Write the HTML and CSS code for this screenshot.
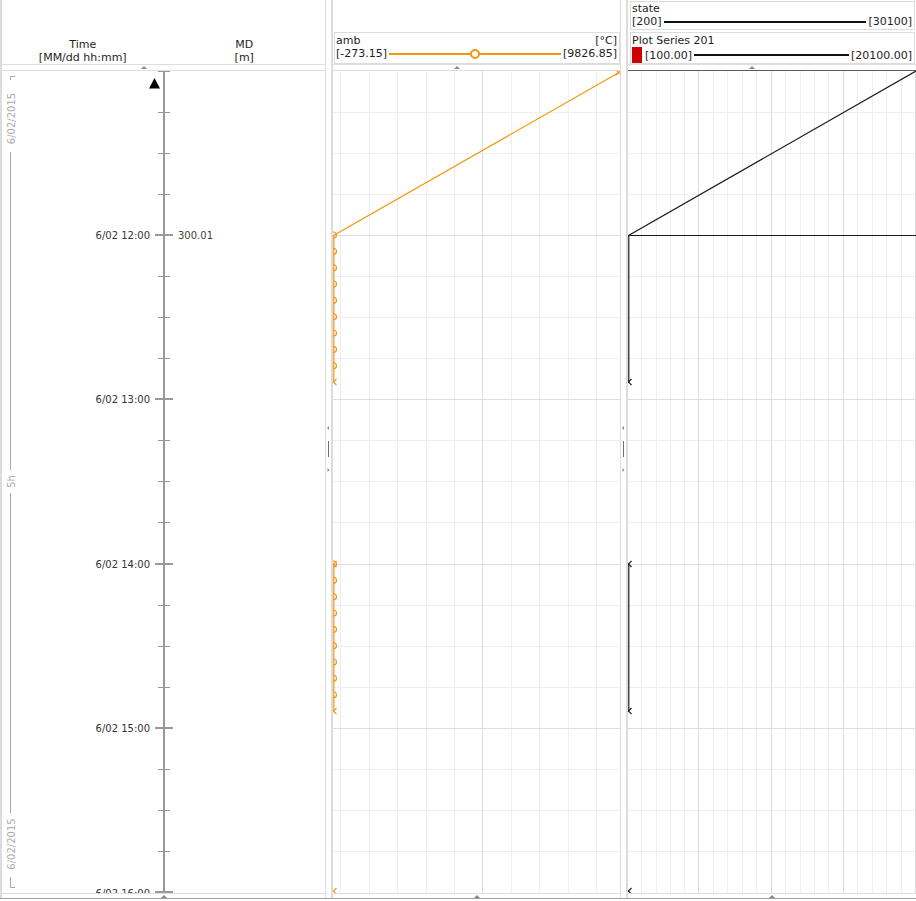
FILE: index.html
```html
<!DOCTYPE html>
<html>
<head>
<meta charset="utf-8">
<title>Log view</title>
<link rel="stylesheet" href="styles.css">
</head>
<body>
<div class="app">
  <section class="track track-index">
    <div class="head head-index">
      <div class="col-title"><div>Time</div><div>[MM/dd hh:mm]</div></div>
      <div class="col-title"><div>MD</div><div>[m]</div></div>
    </div>
    <div class="band"><span class="caret shifted"></span></div>
    <div class="body">
      <svg class="chart" width="323" height="822" viewBox="0 0 323 822">
        <path class="bracket" d="M13 5.5H8.5V9 M8.5 81V399 M8.5 422V742 M8.5 806V816.5H13"/>
        <text class="span-label" transform="translate(9,47.5) rotate(-90)">6/02/2015</text>
        <text class="span-label" transform="translate(9,410.5) rotate(-90)">5h</text>
        <text class="span-label" transform="translate(9,773) rotate(-90)">6/02/2015</text>
        <rect class="axis" x="161" y="0" width="2" height="822"/>
        <path class="tick" d="M156 0.5H168 M156 41.5H168 M156 82.5H168 M156 123.5H168 M156 205.5H168 M156 246.5H168 M156 287.5H168 M156 369.5H168 M156 410.5H168 M156 451.5H168 M156 534.5H168 M156 575.5H168 M156 616.5H168 M156 698.5H168 M156 739.5H168 M156 780.5H168"/>
        <rect class="axis" x="153" y="163" width="18" height="2"/>
        <rect class="axis" x="153" y="327" width="18" height="2"/>
        <rect class="axis" x="153" y="492" width="18" height="2"/>
        <rect class="axis" x="153" y="656" width="18" height="2"/>
        <rect class="axis" x="153" y="820" width="18" height="2"/>
        <polygon class="marker-top" points="152.5,7 147,17.5 158,17.5"/>
        <text class="tlabel end" x="148" y="164">6/02 12:00</text>
        <text class="tlabel val" x="176" y="164">300.01</text>
        <text class="tlabel end" x="148" y="328">6/02 13:00</text>
        <text class="tlabel end" x="148" y="493">6/02 14:00</text>
        <text class="tlabel end" x="148" y="657">6/02 15:00</text>
        <text class="tlabel end" x="148" y="822">6/02 16:00</text>
      </svg>
    </div>
    <div class="foot"><span class="caret"></span></div>
  </section>

  <div class="splitter">
    <svg class="grip" width="5" height="48" viewBox="0 0 5 48">
      <polygon points="1,3 3,1 3,5"/>
      <rect x="2" y="16" width="1" height="16"/>
      <polygon points="1.5,43 3.5,45 1.5,47"/>
    </svg>
  </div>

  <section class="track track-amb">
    <div class="head">
      <div class="legend legend-amb">
        <div class="lg-row"><span>amb</span><span>[°C]</span></div>
        <div class="lg-row"><span>[-273.15]</span><span class="scale scale-orange"><i class="dot"></i></span><span>[9826.85]</span></div>
      </div>
    </div>
    <div class="band"><span class="caret shifted"></span></div>
    <div class="body">
      <svg class="chart" width="287" height="822" viewBox="0 0 287 822">
        <path class="grid-minor" d="M7.5 0V822 M36.5 0V822 M64.5 0V822 M93.5 0V822 M121.5 0V822 M178.5 0V822 M206.5 0V822 M235.5 0V822 M263.5 0V822 M0 41.5H287 M0 82.5H287 M0 123.5H287 M0 205.5H287 M0 246.5H287 M0 287.5H287 M0 369.5H287 M0 410.5H287 M0 451.5H287 M0 534.5H287 M0 575.5H287 M0 616.5H287 M0 698.5H287 M0 739.5H287 M0 780.5H287"/>
        <path class="grid-major" d="M149.5 0V822 M0 164.5H287 M0 328.5H287 M0 493.5H287 M0 657.5H287"/>
        <g class="series-amb">
          <path d="M0.5 164.5L286 1.5"/>
          <path d="M0.8 164V311 M0.8 493V640"/>
          <circle cx="0.5" cy="164" r="3"/>
          <circle cx="0.5" cy="180.3" r="3"/>
          <circle cx="0.5" cy="196.7" r="3"/>
          <circle cx="0.5" cy="213" r="3"/>
          <circle cx="0.5" cy="229.3" r="3"/>
          <circle cx="0.5" cy="245.7" r="3"/>
          <circle cx="0.5" cy="262" r="3"/>
          <circle cx="0.5" cy="278.3" r="3"/>
          <circle cx="0.5" cy="294.7" r="3"/>
          <circle cx="0.5" cy="493" r="3"/>
          <circle cx="0.5" cy="509.3" r="3"/>
          <circle cx="0.5" cy="525.7" r="3"/>
          <circle cx="0.5" cy="542" r="3"/>
          <circle cx="0.5" cy="558.3" r="3"/>
          <circle cx="0.5" cy="574.7" r="3"/>
          <circle cx="0.5" cy="591" r="3"/>
          <circle cx="0.5" cy="607.3" r="3"/>
          <circle cx="0.5" cy="623.7" r="3"/>
          <path d="M-2.5 308l6 6m0-6l-6 6 M-2.5 490l6 6m0-6l-6 6 M-2.5 637l6 6m0-6l-6 6 M-2.5 817l6 6m0-6l-6 6 M282.5 -1.5l6 6m0-6l-6 6"/>
        </g>
      </svg>
    </div>
    <div class="foot"><span class="caret"></span></div>
  </section>

  <div class="splitter">
    <svg class="grip" width="5" height="48" viewBox="0 0 5 48">
      <polygon points="1,3 3,1 3,5"/>
      <rect x="2" y="16" width="1" height="16"/>
      <polygon points="1.5,43 3.5,45 1.5,47"/>
    </svg>
  </div>

  <section class="track track-state">
    <div class="head head-stack">
      <div class="legend legend-state">
        <div class="lg-row"><span>state</span></div>
        <div class="lg-row"><span>[200]</span><span class="scale scale-black"></span><span>[30100]</span></div>
      </div>
      <div class="legend legend-series">
        <div class="lg-row"><span>Plot Series 201</span></div>
        <div class="lg-row tall"><span class="swatch"></span><span>[100.00]</span><span class="scale scale-black"></span><span>[20100.00]</span></div>
      </div>
    </div>
    <div class="band band-dark"><span class="caret shifted"></span></div>
    <div class="body">
      <svg class="chart" width="288" height="822" viewBox="0 0 288 822">
        <path class="grid-minor" d="M13.5 0V822 M28.5 0V822 M42.5 0V822 M56.5 0V822 M85.5 0V822 M99.5 0V822 M114.5 0V822 M128.5 0V822 M157.5 0V822 M172.5 0V822 M186.5 0V822 M200.5 0V822 M229.5 0V822 M244.5 0V822 M258.5 0V822 M273.5 0V822 M0 41.5H288 M0 82.5H288 M0 123.5H288 M0 205.5H288 M0 246.5H288 M0 287.5H288 M0 369.5H288 M0 410.5H288 M0 451.5H288 M0 534.5H288 M0 575.5H288 M0 616.5H288 M0 698.5H288 M0 739.5H288 M0 780.5H288"/>
        <path class="grid-major" d="M70.5 0V822 M143.5 0V822 M215.5 0V822 M287.5 0V822 M0 164.5H288 M0 328.5H288 M0 493.5H288 M0 657.5H288"/>
        <g class="series-state">
          <path d="M0.5 164.5L288 0"/>
          <path d="M0 164.5H288"/>
          <path d="M0.8 164V311 M0.8 493V640"/>
          <path d="M-2.5 308l6 6m0-6l-6 6 M-2.5 490l6 6m0-6l-6 6 M-2.5 637l6 6m0-6l-6 6 M-2.5 817l6 6m0-6l-6 6"/>
        </g>
      </svg>
    </div>
    <div class="foot"><span class="caret"></span></div>
  </section>
</div>
</body>
</html>
```

FILE: styles.css
```css
html, body {
  margin: 0;
  padding: 0;
  height: 901px;
  overflow: hidden;
  background: #fff;
}

body {
  font-family: "DejaVu Sans", Verdana, sans-serif;
  font-size: 11px;
  color: #1e1e1e;
}

.app {
  display: flex;
  height: 898px;
  border-bottom: 1px solid #a0a0a0;
}

.track {
  flex: none;
  display: flex;
  flex-direction: column;
  border-left: 2px solid #dcdcdc;
}

.track-index {
  width: 323px;
  border-right: 1px solid #dedede;
}

.track-amb {
  width: 287px;
  border-right: 1px solid #dedede;
}

.track-state {
  width: 288px;
}

.splitter {
  flex: none;
  width: 5px;
  display: flex;
  align-items: center;
  justify-content: center;
}

.grip {
  display: block;
}

.grip polygon {
  fill: #888;
}

.grip rect {
  fill: #707070;
}

/* header */
.head {
  height: 64px;
  border-bottom: 1px solid #dedede;
  display: flex;
  flex-direction: column;
  justify-content: flex-end;
}

.head-index {
  flex-direction: row;
  align-items: flex-end;
}

.col-title {
  flex: 1;
  text-align: center;
  line-height: 13px;
}

.head-stack {
  justify-content: flex-start;
}

.legend {
  border: 1px solid #dcdcdc;
}

.legend-amb {
  margin-left: 1px;
  padding: 1px 2px 3px 1px;
}

.legend-state {
  margin: 1px 1px 0 2px;
  padding: 0 2px 1px 1px;
}

.legend-series {
  margin: 2px 1px 0 2px;
  padding: 1px 2px 0 1px;
}

.lg-row {
  display: flex;
  align-items: center;
  justify-content: space-between;
  height: 13px;
  line-height: 13px;
  white-space: nowrap;
}

.lg-row.tall {
  height: 16px;
}

.scale {
  flex: 1;
  height: 2px;
  margin: 0 2px;
  display: flex;
  align-items: center;
  justify-content: center;
}

.scale-orange {
  background: #f5960f;
}

.scale-black {
  background: #111;
}

.dot {
  flex: none;
  width: 10px;
  height: 10px;
  box-sizing: border-box;
  border: 2px solid #f5960f;
  border-radius: 50%;
  background: #fff;
}

.swatch {
  flex: none;
  width: 10px;
  height: 16px;
  background: #cc0000;
  margin-right: 3px;
}

/* collapse bands */
.band {
  height: 5px;
  border-bottom: 1px solid #dedede;
  display: flex;
  justify-content: center;
  align-items: center;
}

.band-dark {
  border-bottom-color: #5a5a5a;
}

.foot {
  height: 4px;
  display: flex;
  justify-content: center;
  align-items: center;
}

.caret {
  width: 0;
  height: 0;
  border-left: 3px solid transparent;
  border-right: 3px solid transparent;
  border-bottom: 3px solid #8a8a8a;
}

.caret.shifted {
  margin-right: 40px;
}

/* body */
.body {
  height: 822px;
  border-bottom: 1px solid #dedede;
  overflow: hidden;
}

.chart {
  display: block;
  overflow: hidden;
}

.bracket {
  fill: none;
  stroke: #a8a8a8;
  stroke-width: 1;
}

.span-label {
  font-family: "DejaVu Sans", Verdana, sans-serif;
  font-size: 10px;
  fill: #ababab;
  text-anchor: middle;
  dominant-baseline: central;
}

.axis {
  fill: #999;
}

.tick {
  fill: none;
  stroke: #999;
  stroke-width: 1;
}

.marker-top {
  fill: #000;
}

.tlabel {
  font-family: "DejaVu Sans", Verdana, sans-serif;
  font-size: 10px;
  fill: #333;
  dominant-baseline: central;
}

.tlabel.end {
  text-anchor: end;
}

.tlabel.val {
  fill: #444;
}

.grid-minor {
  fill: none;
  stroke: #efefef;
  stroke-width: 1;
}

.grid-major {
  fill: none;
  stroke: #dddddd;
  stroke-width: 1;
}

.series-amb path,
.series-amb circle {
  fill: none;
  stroke: #f5960f;
  stroke-width: 1.2;
}

.series-state path {
  fill: none;
  stroke: #1a1a1a;
  stroke-width: 1.2;
}
```
